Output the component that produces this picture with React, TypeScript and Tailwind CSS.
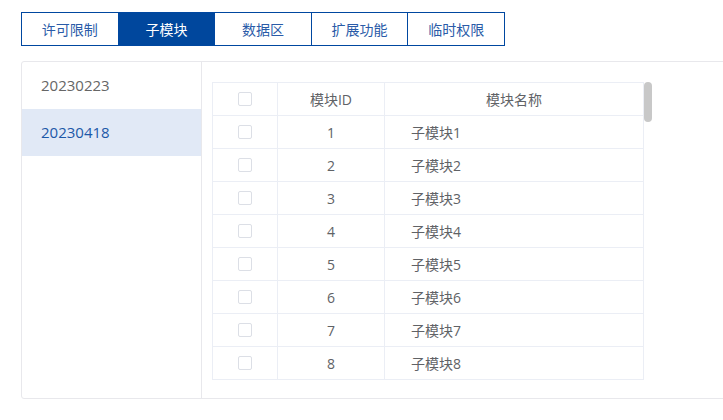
import { useState } from 'react';

const tabs = ['许可限制', '子模块', '数据区', '扩展功能', '临时权限'];
const versions = ['20230223', '20230418'];
const rows = Array.from({ length: 8 }, (_, i) => ({ id: i + 1, name: `子模块${i + 1}` }));

function Checkbox() {
  return <span className="block w-[14px] h-[14px] border border-[#dcdfe6] rounded-[2px] bg-white" />;
}

export default function App() {
  const [tab, setTab] = useState(1);
  const [ver, setVer] = useState(1);

  return (
    <div className="w-[723px] h-[420px] overflow-hidden bg-white text-[14px] text-[#606266]"
      style={{ fontFamily: '"Open Sans", "Noto Sans CJK SC", sans-serif' }}>
      <div className="flex ml-[21px] mt-[12px] w-[484px] h-[34px] border border-[#0047a0]">
        {tabs.map((t, i) => (
          <button key={t} onClick={() => setTab(i)}
            className={`flex-1 flex items-center justify-center ${i > 0 ? 'border-l border-[#0047a0]' : ''} ${
              tab === i ? 'bg-[#00479d] text-white' : 'bg-white text-[#2a5ba8]'}`}>
            {t}
          </button>
        ))}
      </div>

      <div className="flex ml-[21px] mt-[15px] w-[720px] h-[338px] border border-[#e8e8ec] rounded-[3px]">
        {/* 版本列表 */}
        <div className="w-[180px] border-r border-[#e8e8ec]">
          {versions.map((v, i) => (
            <div key={v} onClick={() => setVer(i)}
              className={`h-[47px] pl-[19px] flex items-center text-[15px] cursor-pointer ${
                ver === i ? 'bg-[#e1e9f6] text-[#1c58a8]' : 'text-[#666]'}`}>
              {v}
            </div>
          ))}
        </div>

        {/* 子模块表格 */}
        <div className="relative pl-[10px] pt-[20px]">
          <table className="w-[432px] border-collapse border border-[#ebeef5] table-fixed">
            <colgroup>
              <col className="w-[65px]" />
              <col className="w-[107px]" />
              <col />
            </colgroup>
            <thead>
              <tr className="h-[33px]">
                <th className="border border-[#ebeef5] font-normal">
                  <div className="flex justify-center"><Checkbox /></div>
                </th>
                <th className="border border-[#ebeef5] font-normal text-center">模块ID</th>
                <th className="border border-[#ebeef5] font-normal text-center">模块名称</th>
              </tr>
            </thead>
            <tbody>
              {rows.map(r => (
                <tr key={r.id} className="h-[33px]">
                  <td className="border border-[#ebeef5]">
                    <div className="flex justify-center"><Checkbox /></div>
                  </td>
                  <td className="border border-[#ebeef5] text-center">{r.id}</td>
                  <td className="border border-[#ebeef5] pl-[26px]">{r.name}</td>
                </tr>
              ))}
            </tbody>
          </table>
          <div className="absolute left-[442px] top-[20px] w-[8px] h-[40px] rounded-full bg-[#c8c8c8]" />
        </div>
      </div>
    </div>
  );
}
